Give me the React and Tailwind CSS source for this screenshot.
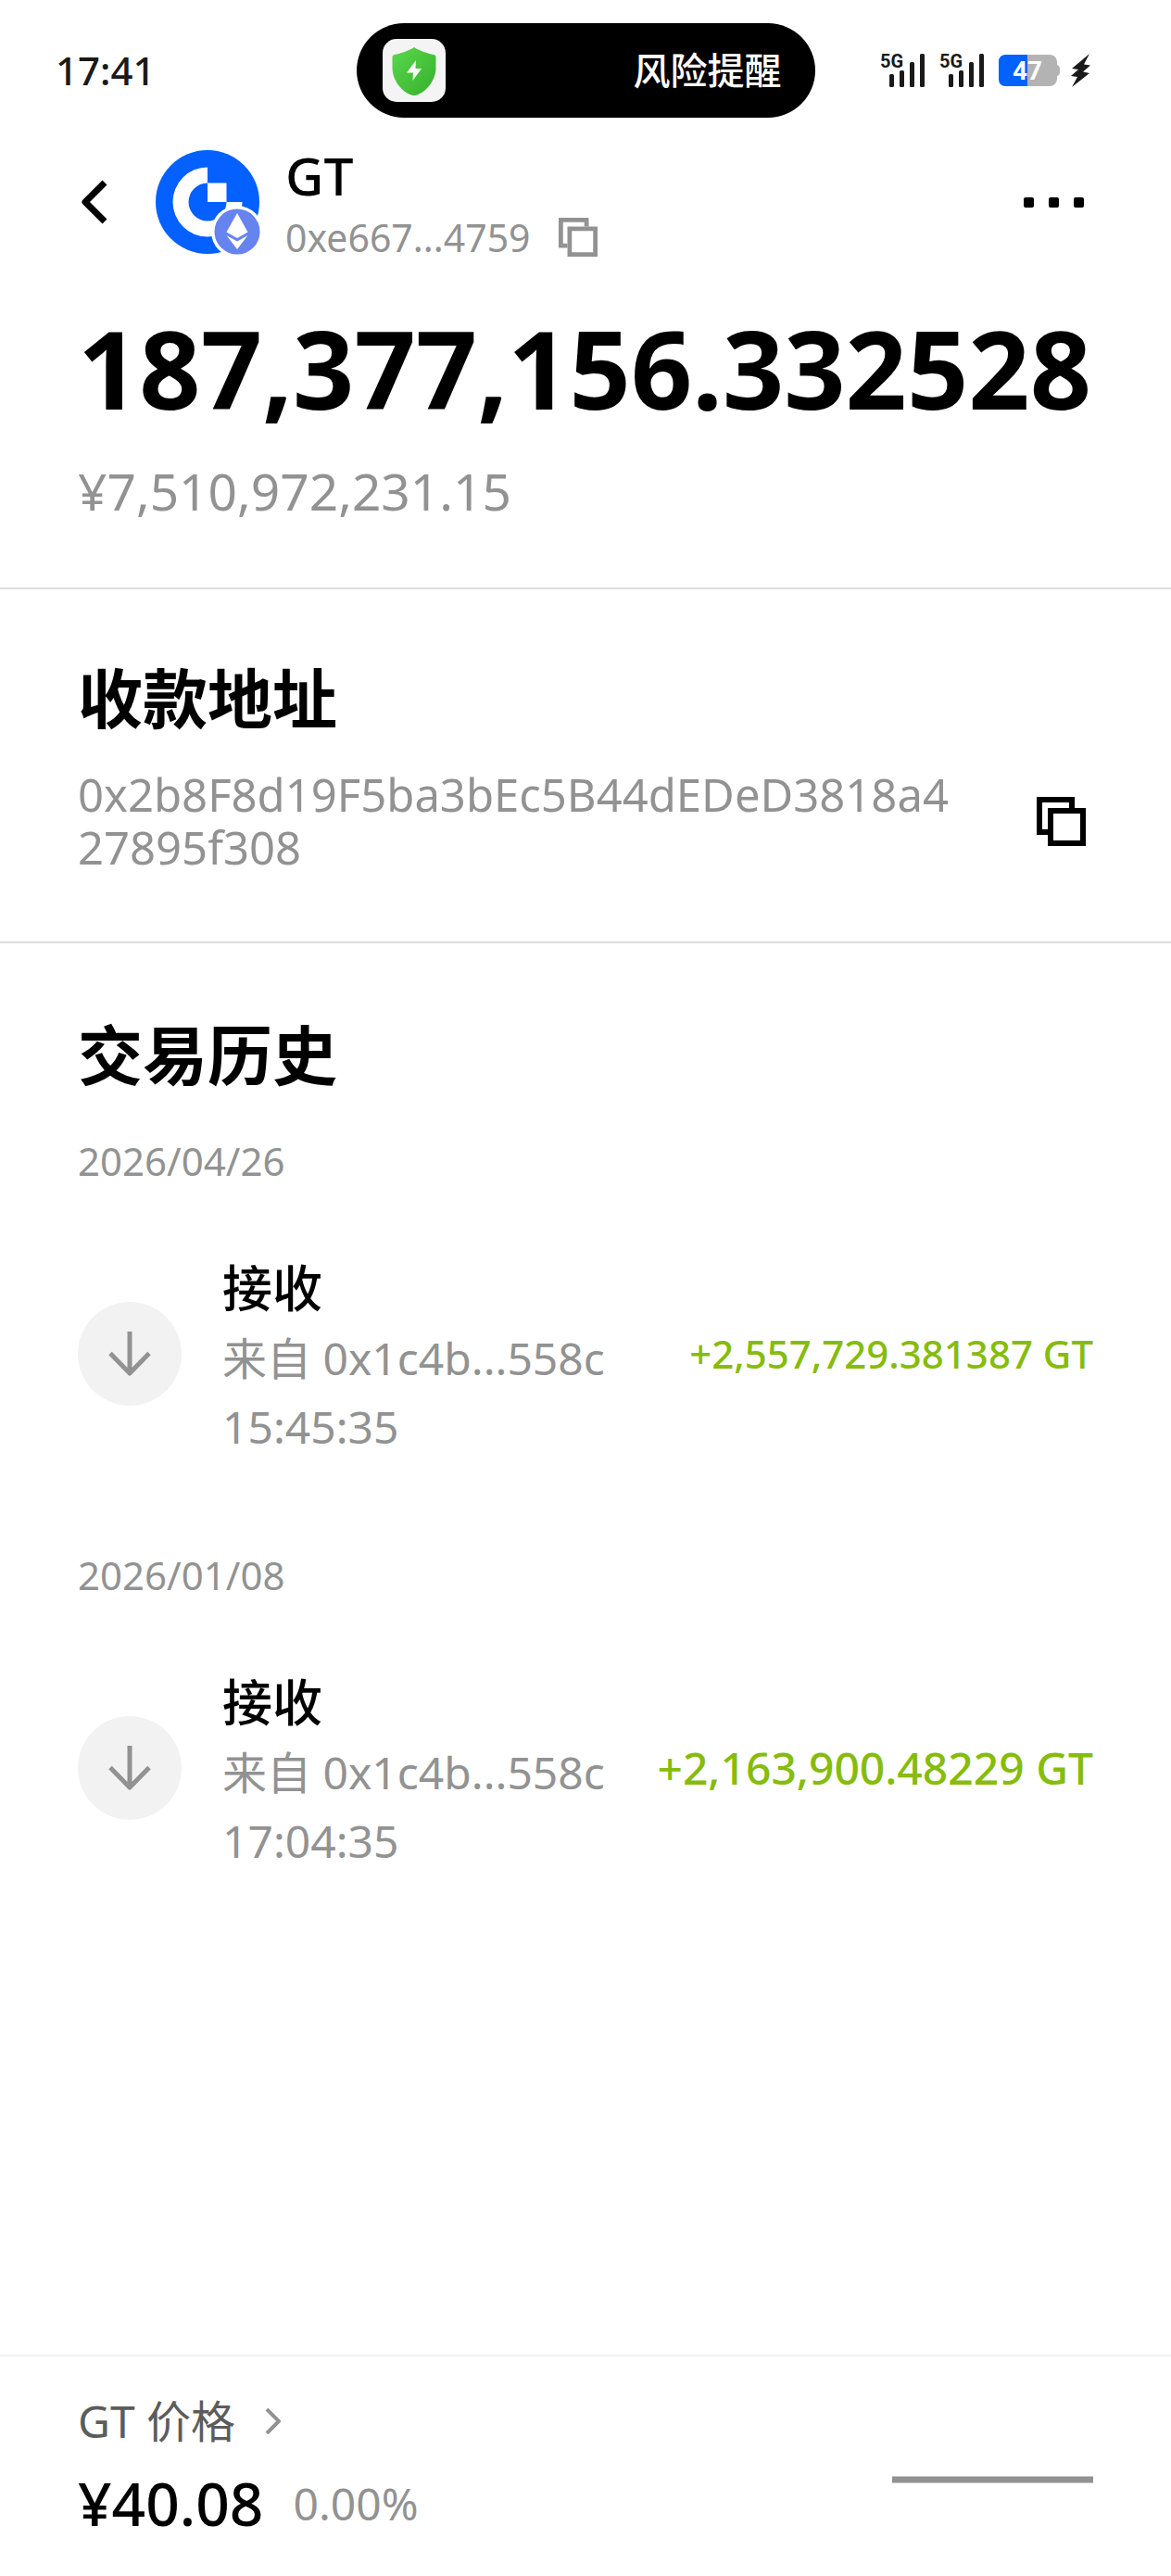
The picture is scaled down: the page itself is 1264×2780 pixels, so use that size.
const TRANSACTIONS = [
  {
    date: "2026/04/26",
    type: "接收",
    from: "0x1c4b...558c",
    time: "15:45:35",
    amount: "+2,557,729.381387 GT",
    compact: true,
  },
  {
    date: "2026/01/08",
    type: "接收",
    from: "0x1c4b...558c",
    time: "17:04:35",
    amount: "+2,163,900.48229 GT",
    compact: false,
  },
];

const CopyIcon = ({ className }) => (
  <svg viewBox="0 0 53 53" fill="none" stroke="currentColor" strokeWidth="6" className={className}>
    <path d="M12 38H3V3H38V12" />
    <rect x="15" y="15" width="35" height="35" />
  </svg>
);

const SignalIcon = () => (
  <svg viewBox="0 0 48 48" className="size-12" fill="#1a1a1a">
    <text x="0" y="21" fontSize="20" fontWeight="700" fontFamily="Roboto, sans-serif">
      5G
    </text>
    <rect x="10" y="28" width="5" height="14" rx="1.5" />
    <rect x="21" y="24" width="5" height="18" rx="1.5" />
    <rect x="32" y="15" width="5" height="27" rx="1.5" />
    <rect x="43" y="6" width="5" height="36" rx="1.5" />
  </svg>
);

const StatusBar = () => (
  <div className="grid grid-cols-[1fr_495px_1fr] items-center pt-[25px]">
    <span className="pl-[60px] text-[42px] leading-[60px] font-medium text-[#1a1a1a]">17:41</span>

    {/* Island */}
    <div className="flex h-[102px] items-center justify-between rounded-full bg-black pr-9 pl-7">
      <svg viewBox="0 0 68 68" className="size-[68px]">
        <defs>
          <linearGradient id="shield" x1="0" y1="0" x2="1" y2="1">
            <stop offset="0" stopColor="#5bd84e" />
            <stop offset="1" stopColor="#35b02b" />
          </linearGradient>
        </defs>
        <rect width="68" height="68" rx="15" fill="#f4f4f4" />
        <path
          d="M34 9C40 13 50 16 55 17C57 17.500 57.500 18 57.500 20V31C57.500 45 47 57 37 60.500Q34 61.500 31 60.500C21 57 10.500 45 10.500 31V20C10.500 18 11 17.500 13 17C18 16 28 13 34 9Z"
          fill="url(#shield)"
        />
        <path d="M36 23L26 36.500H33L32.500 45L42 32H35.500Z" fill="#fff" />
      </svg>
      <span className="text-[40px] leading-[60px] font-medium text-white">风险提醒</span>
    </div>

    <div className="flex items-center justify-end gap-4 pr-[87px]">
      <SignalIcon />
      <SignalIcon />
      <svg viewBox="0 0 66 34" className="h-[34px] w-[66px]">
        <rect width="63" height="34" rx="8" fill="#b3b3b3" />
        <path d="M63 11Q66 12 66 15V19Q66 22 63 23Z" fill="#b3b3b3" />
        <path d="M8 0H31V34H8Q0 34 0 26V8Q0 0 8 0Z" fill="#0162ff" />
        <text
          x="31"
          y="27"
          textAnchor="middle"
          fontSize="28"
          fontWeight="700"
          fontFamily="Roboto, sans-serif"
          fill="#fff"
        >
          47
        </text>
      </svg>
      <svg viewBox="0 0 21 36" className="-ml-1 h-9 w-[21px]" fill="#1a1a1a">
        <path d="M20 0L1 16L8 17L0 24L7 25L1 36L20 21L13 19.500L21 12.500L14 11.500Z" />
      </svg>
    </div>
  </div>
);

const CoinLogo = () => (
  <svg viewBox="0 0 116 116" className="size-[116px]">
    <circle cx="56" cy="58" r="56" fill="#0460ff" />
    <path
      d="M56 20.500A37.500 37.500 0 1 0 93.500 58H76.500A20.500 20.500 0 1 1 56 37.500Z"
      fill="#fff"
    />
    <rect x="56" y="37.500" width="20.500" height="20.500" fill="#fff" />
    {/* Network badge */}
    <circle cx="88" cy="90" r="28" fill="#fff" />
    <circle cx="88" cy="90" r="24.500" fill="#6683f0" />
    <path d="M88 70L76.500 90.500L88 97L99.500 90.500Z" fill="#fff" />
    <path d="M76.500 94L88 109L99.500 94L88 100.500Z" fill="#fff" />
  </svg>
);

const Header = () => (
  <header className="mt-6 flex items-center pr-[94px] pl-[84px]">
    <button type="button" aria-label="返回" className="mr-[52px]">
      <svg
        viewBox="0 0 32 48"
        className="h-12 w-8"
        fill="none"
        stroke="#000"
        strokeWidth="7"
        strokeLinejoin="round"
      >
        <path d="M29 3L8 24L29 45" />
      </svg>
    </button>
    <CoinLogo />
    <div className="ml-6 flex-1">
      <h1 className="text-[57px] leading-[76px] font-medium">GT</h1>
      <div className="flex items-center gap-[30px] text-[#929292]">
        <span className="text-[41px] leading-[58px]">0xe667...4759</span>
        <button type="button" aria-label="复制合约地址">
          <CopyIcon className="size-[42px]" />
        </button>
      </div>
    </div>
    <button type="button" aria-label="更多" className="flex gap-4">
      <span className="size-[11px] rounded-[2px] bg-black" />
      <span className="size-[11px] rounded-[2px] bg-black" />
      <span className="size-[11px] rounded-[2px] bg-black" />
    </button>
  </header>
);

const Transaction = ({ tx }) => (
  <li>
    <p className="text-[42px] leading-[60px] text-[#929292]">{tx.date}</p>
    <div className="mt-16 flex items-center">
      <div className="flex size-28 shrink-0 items-center justify-center rounded-full bg-[#f2f2f2]">
        <svg
          viewBox="0 0 48 48"
          className="size-12"
          fill="none"
          stroke="#929292"
          strokeWidth="5"
          strokeLinejoin="round"
        >
          <path d="M24 0V45M3 23.500L24 45L45 23.500" />
        </svg>
      </div>
      <div className="ml-11 flex-1 pt-1.5 text-[48px] text-[#929292]">
        <h3 className="text-[54px] leading-[74px] font-medium text-black">{tx.type}</h3>
        <p className="leading-[78px]">来自 {tx.from}</p>
        <p className="leading-[70px]">{tx.time}</p>
      </div>
      <span
        className={`leading-[60px] font-medium text-[#86bc0c] ${
          tx.compact ? "text-[42px]" : "text-[48px]"
        }`}
      >
        {tx.amount}
      </span>
    </div>
  </li>
);

export default function App() {
  return (
    <div className="flex min-h-screen flex-col bg-white font-['Noto_Sans','Noto_Sans_CJK_SC',sans-serif] text-black">
      <StatusBar />
      <Header />

      <main className="flex-1">
        {/* Balance */}
        <section className="border-b-2 border-[#dcdcdc] px-[84px] pt-[42px] pb-[66px]">
          <p className="text-[116px] leading-[140px] font-bold">187,377,156.332528</p>
          <p className="mt-[25px] text-[55px] leading-[76px] text-[#929292]">¥7,510,972,231.15</p>
        </section>

        {/* Receive address */}
        <section className="border-b-2 border-[#dcdcdc] px-[84px] pt-[70px] pb-[73px]">
          <h2 className="text-[70px] leading-[96px] font-bold">收款地址</h2>
          <div className="mt-[27px] flex items-center justify-between gap-20 pr-2">
            <p className="flex-1 text-[49px] leading-[57px] break-all text-[#929292]">
              0x2b8F8d19F5ba3bEc5B44dEDeD3818a427895f308
            </p>
            <button type="button" aria-label="复制收款地址">
              <CopyIcon className="size-[53px]" />
            </button>
          </div>
        </section>

        {/* History */}
        <section className="px-[84px] pt-[73px]">
          <h2 className="text-[70px] leading-[96px] font-bold">交易历史</h2>
          <ul className="mt-9 flex flex-col gap-[95px]">
            {TRANSACTIONS.map((tx) => (
              <Transaction key={tx.date} tx={tx} />
            ))}
          </ul>
        </section>
      </main>

      <footer className="flex items-end justify-between border-t-2 border-[#f3f3f3] px-[84px] pt-[37px] pb-9">
        <div>
          <a href="#" className="flex items-center gap-8 text-[48px] leading-[66px] text-[#5c5c5c]">
            GT 价格
            <svg viewBox="0 0 17 28" className="h-7 w-[17px]" fill="none" stroke="#929292" strokeWidth="4">
              <path d="M2 1L15 14L2 27" />
            </svg>
          </a>
          <div className="mt-[14px] flex items-center gap-8 leading-[84px]">
            <span className="text-[64px] font-medium">¥40.08</span>
            <span className="text-[48px] text-[#929292]">0.00%</span>
          </div>
        </div>
        {/* Price trend */}
        <svg viewBox="0 0 217 136" className="h-[136px] w-[217px]">
          <path d="M0 68H217" stroke="#929292" strokeWidth="7" />
        </svg>
      </footer>
    </div>
  );
}
